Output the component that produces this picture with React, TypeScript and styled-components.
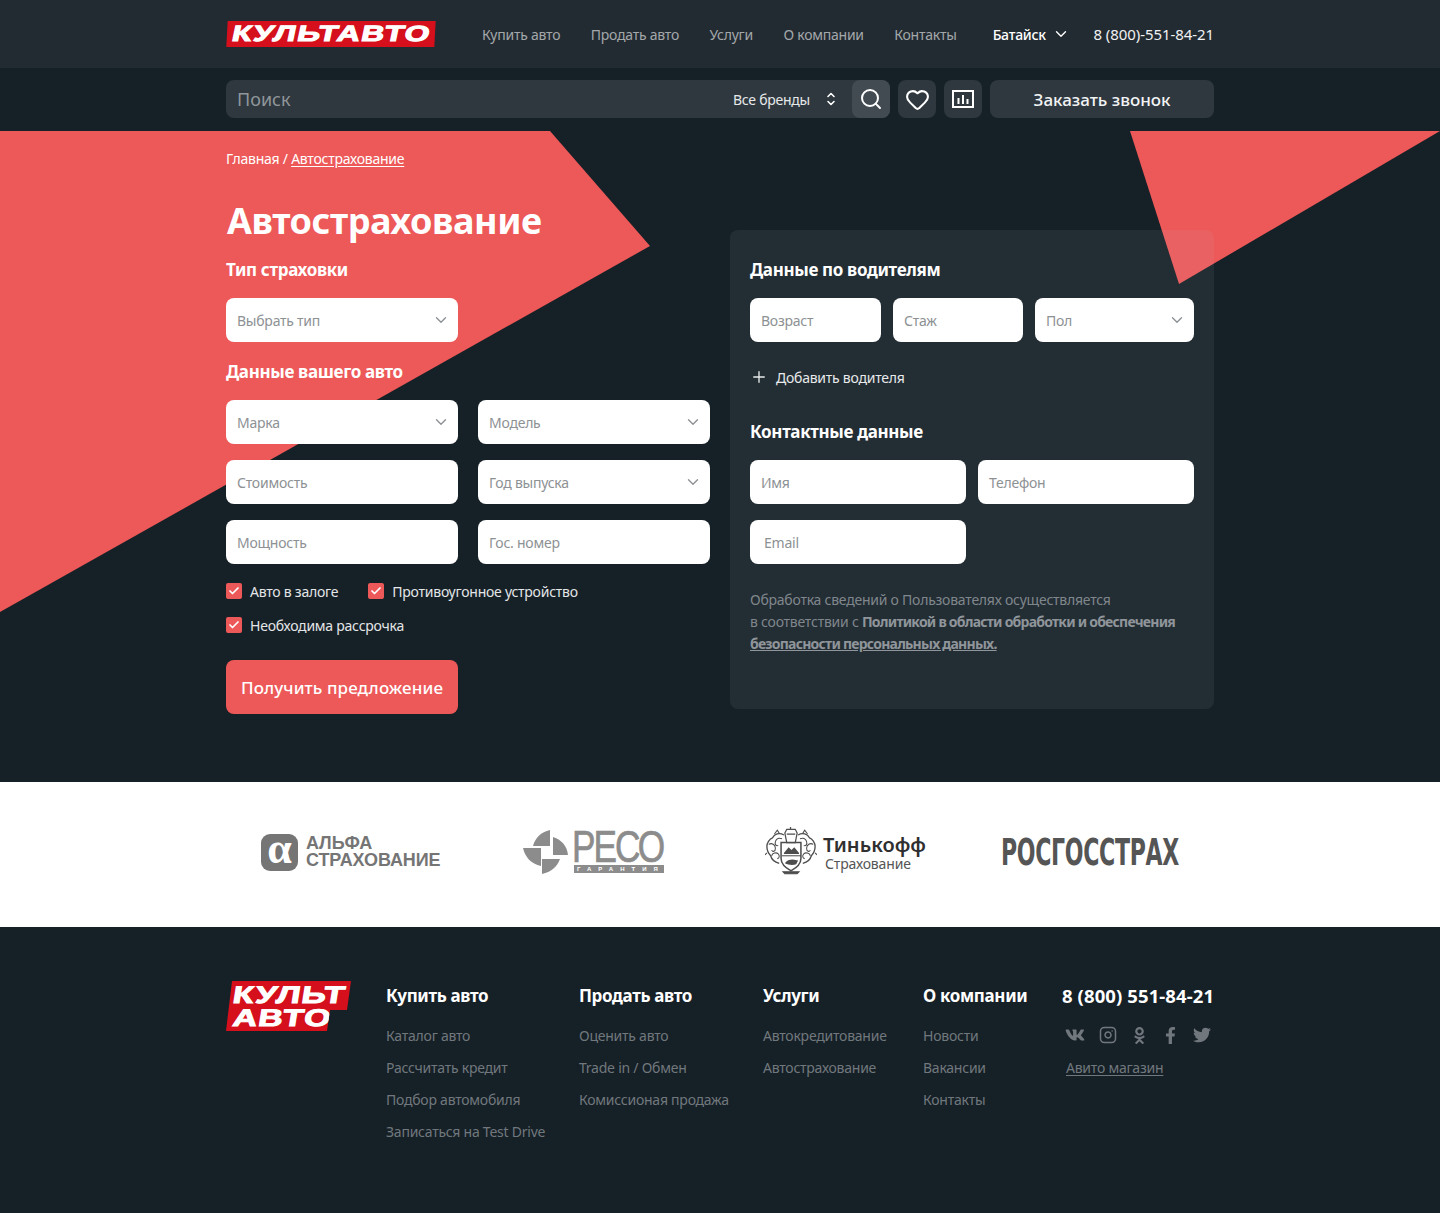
import React from 'react'
import styled, { createGlobalStyle } from 'styled-components'
import { Check, ChevronDown, Heart, Plus, Search } from 'lucide-react'
import { FaFacebookF, FaOdnoklassniki, FaTwitter, FaVk } from 'react-icons/fa'
import { FiInstagram } from 'react-icons/fi'

const GlobalStyle = createGlobalStyle`
  * {
    box-sizing: border-box;
  }

  body {
    margin: 0;
    background: #162027;
    color: #fff;
    font-family: 'Noto Sans', 'Open Sans', sans-serif;
    letter-spacing: -0.015em;
  }

  a {
    color: inherit;
    text-decoration: none;
  }
`

const Container = styled.div`
  width: 988px;
  margin: 0 auto;
`

const TopBar = styled.header`
  height: 68px;
  background: #232b32;
`

const TopRow = styled(Container)`
  display: flex;
  align-items: center;
  height: 68px;
`

const LogoBox = styled.div`
  width: 208px;
  height: 26px;
  margin: 0 47px 0 1px;
  background: #d50f1c;
  transform: skewX(-3deg);
  display: flex;
  align-items: center;
  justify-content: center;
  overflow: hidden;
`

const LogoText = styled.span`
  font-family: 'Liberation Sans', sans-serif;
  font-weight: 700;
  font-size: 22px;
  color: #fff;
  letter-spacing: 0.9px;
  transform: skewX(-9deg) scaleX(1.45);
  -webkit-text-stroke: 1px #fff;
  white-space: nowrap;
`

const Nav = styled.nav`
  display: flex;
  gap: 30.5px;
  font-size: 14px;
  color: #a3a8ab;
`

const City = styled.div`
  display: flex;
  align-items: center;
  gap: 6px;
  margin-left: 36px;
  font-size: 14px;
  font-weight: 500;
`

const Phone = styled.a`
  margin-left: auto;
  font-size: 15px;
  letter-spacing: -0.005em;
  color: #f0f1f2;
`

const SearchBand = styled.div`
  height: 63px;
  background: #162027;
`

const SearchRow = styled(Container)`
  display: flex;
  gap: 8px;
  padding-top: 12px;
`

const SearchBox = styled.div`
  width: 664px;
  height: 38px;
  display: flex;
  align-items: center;
  background: #2f383f;
  border-radius: 8px;
  padding-left: 11px;
`

const SearchHint = styled.span`
  flex: 1;
  font-size: 18px;
  letter-spacing: 0;
  color: #90969a;
`

const Brands = styled.div`
  display: flex;
  align-items: center;
  gap: 16px;
  margin-right: 16px;
  font-size: 14px;
  color: #e6e8e9;
`

const IconButton = styled.button<{ $active?: boolean }>`
  width: 38px;
  height: 38px;
  padding: 0;
  border: 0;
  border-radius: 8px;
  display: flex;
  align-items: center;
  justify-content: center;
  color: #fff;
  background: ${({ $active }) => ($active ? '#424b52' : '#2f383f')};
`

const CallButton = styled.button`
  flex: 1;
  height: 38px;
  border: 0;
  border-radius: 8px;
  background: #2f383f;
  color: #f2f3f4;
  font-family: inherit;
  font-size: 17px;
  font-weight: 500;
`

const Hero = styled.section`
  position: relative;
  height: 651px;
  overflow: hidden;
  background: #162027;
`

const Triangle = styled.div<{ $side: 'left' | 'right' }>`
  position: absolute;
  top: 0;
  background: #ed5858;
  ${({ $side }) =>
    $side === 'left'
      ? `left: 0; width: 650px; height: 481px; clip-path: polygon(0 0, 550px 0, 650px 115px, 0 481px);`
      : `right: 0; width: 310px; height: 153px; clip-path: polygon(0 0, 310px 0, 49px 153px);`}
`

const HeroGrid = styled(Container)`
  position: relative;
  display: grid;
  grid-template-columns: 484px 484px;
  gap: 20px;
  align-items: start;
`

const Crumbs = styled.div`
  padding-top: 19px;
  height: 49px;
  font-size: 14px;
  line-height: 17px;
  color: #fff;

  a {
    text-decoration: underline;
    text-underline-offset: 2px;
  }
`

const Title = styled.h1`
  margin: 18px 0 0 1px;
  font-size: 36px;
  line-height: 46px;
  font-weight: 700;
  letter-spacing: -0.012em;
`

const SectionTitle = styled.h3<{ $top?: number }>`
  margin: ${({ $top }) => $top ?? 0}px 0 16px;
  font-size: 17px;
  line-height: 24px;
  font-weight: 700;
  letter-spacing: -0.02em;
`

const FieldGrid = styled.div`
  display: grid;
  grid-template-columns: 232px 232px;
  gap: 16px 20px;
`

const Field = styled.div`
  height: 44px;
  display: flex;
  align-items: center;
  justify-content: space-between;
  padding: 0 8px 0 11px;
  background: #fff;
  border-radius: 8px;
  font-size: 14px;
  color: #8d9194;

  svg {
    color: #8d9194;
  }
`

const Checks = styled.div`
  display: flex;
  flex-wrap: wrap;
  gap: 18px 30px;
  margin-top: 19px;
`

const CheckItem = styled.label<{ $wide?: boolean }>`
  display: flex;
  align-items: center;
  gap: 8px;
  height: 16px;
  font-size: 14px;
  color: #e4e6e7;
  ${({ $wide }) => $wide && 'flex-basis: 100%;'}
`

const CheckBox = styled.span`
  width: 16px;
  height: 16px;
  border-radius: 2px;
  background: #ed5858;
  display: flex;
  align-items: center;
  justify-content: center;
  color: #fff;
`

const Submit = styled.button`
  display: block;
  width: 232px;
  height: 54px;
  margin-top: 27px;
  border: 0;
  border-radius: 8px;
  background: #ed5858;
  color: #fff;
  font-family: inherit;
  font-size: 17px;
  letter-spacing: 0.1px;
  font-weight: 500;
`

const Panel = styled.div`
  margin-top: 99px;
  height: 479px;
  padding: 28px 20px 0;
  border-radius: 8px;
  background: rgba(190, 205, 215, 0.08);
`

const DriverRow = styled.div`
  display: grid;
  grid-template-columns: 131px 130px 159px;
  gap: 12px;
`

const AddDriver = styled.div`
  display: flex;
  align-items: center;
  gap: 8px;
  margin-top: 24px;
  height: 22px;
  font-size: 14px;
  color: #e8eaeb;
`

const ContactGrid = styled.div`
  display: grid;
  grid-template-columns: 216px 216px;
  gap: 16px 12px;
`

const EmailField = styled(Field)`
  padding-left: 14px;
`

const Policy = styled.p`
  margin: 25px 0 0;
  font-size: 14px;
  line-height: 22px;
  color: #80878c;
  white-space: nowrap;

  a {
    font-weight: 700;
    letter-spacing: -0.055em;
    color: #8f959a;
  }

  a.line {
    text-decoration: underline;
  }
`

const Partners = styled.section`
  height: 145px;
  background: #fff;
`

const PartnerRow = styled(Container)`
  height: 145px;
  display: grid;
  grid-template-columns: 262px 242px 236px 213px;
  align-items: center;
  padding: 0 0 5px 35px;
  letter-spacing: 0;
`

const Alfa = styled.div`
  display: flex;
  align-items: center;
  gap: 8px;
  color: #757575;
`

const AlfaMark = styled.div`
  width: 37px;
  height: 37px;
  border-radius: 9px;
  background: #757575;
  color: #fff;
  display: flex;
  align-items: center;
  justify-content: center;
  font-family: 'Liberation Serif', serif;
  font-size: 44px;
  font-weight: 700;
  line-height: 30px;
  padding-bottom: 6px;
`

const AlfaText = styled.div`
  font-family: 'Liberation Sans', sans-serif;
  font-size: 18px;
  line-height: 17px;
  font-weight: 700;
  letter-spacing: -0.1px;
`

const Reso = styled.div`
  display: flex;
  align-items: flex-start;
  color: #8c8c8c;
`

const ResoName = styled.div`
  width: 92px;
  margin-left: 2px;
  font-family: 'Liberation Sans', sans-serif;
  font-size: 44px;
  line-height: 35px;
  letter-spacing: -2.4px;
  -webkit-text-stroke: 0.7px #8c8c8c;
  transform: scaleX(0.8);
  transform-origin: left;
  white-space: nowrap;
`

const ResoSub = styled.div`
  width: 90px;
  height: 8px;
  margin: 1px 0 0 4px;
  padding-left: 3px;
  background: #8c8c8c;
  color: #fff;
  font-family: 'Liberation Sans', sans-serif;
  font-size: 6px;
  line-height: 8px;
  font-weight: 700;
  letter-spacing: 7px;
  overflow: hidden;
  white-space: nowrap;
`

const Tinkoff = styled.div`
  display: flex;
  align-items: center;
  gap: 6px;
`

const TinkoffName = styled.div`
  font-size: 20px;
  line-height: 22px;
  font-weight: 600;
  color: #2f2f2f;
`

const TinkoffSub = styled.div`
  margin-left: 2px;
  font-size: 14px;
  line-height: 15px;
  letter-spacing: -0.01em;
  color: #555;
`

const Rosgos = styled.div`
  font-family: 'DejaVu Sans Condensed', 'DejaVu Sans', sans-serif;
  font-size: 38px;
  line-height: 40px;
  font-weight: 700;
  letter-spacing: -0.5px;
  color: #555;
  transform: scaleX(0.645);
  transform-origin: left;
  white-space: nowrap;
`

const Footer = styled.footer`
  height: 286px;
  background: #162027;
`

const FooterRow = styled(Container)`
  display: grid;
  grid-template-columns: 160px 193px 184px 160px 139px 1fr;
  padding-top: 54px;
`

const FooterLogo = styled.div`
  width: 125px;
  height: 50px;
  background: #d50f1c;
  clip-path: polygon(6px 0, 125px 0, 121px 29px, 104px 29px, 101px 50px, 0 50px);
  display: flex;
  flex-direction: column;
  padding: 2px 0 0 7px;
`

const FooterLogoLine = styled.span`
  font-family: 'Liberation Sans', sans-serif;
  font-weight: 700;
  font-size: 24px;
  line-height: 23px;
  letter-spacing: 0.9px;
  color: #fff;
  -webkit-text-stroke: 1px #fff;
  transform: skewX(-9deg) scaleX(1.41);
  transform-origin: left;
  white-space: nowrap;
`

const ColumnTitle = styled.div`
  font-size: 17px;
  line-height: 24px;
  font-weight: 700;
  letter-spacing: -0.02em;
  margin: 3px 0 12px;
  white-space: nowrap;
`

const PhoneTitle = styled(ColumnTitle)`
  font-size: 18.5px;
  letter-spacing: 0.1px;
`

const ColumnLink = styled.a`
  display: block;
  font-size: 14px;
  line-height: 32px;
  color: #71787d;
  white-space: nowrap;
`

const Socials = styled.div`
  display: flex;
  justify-content: space-between;
  align-items: center;
  width: 146px;
  margin: 18px 0 0 3px;
  height: 18px;
  color: #71787d;
`

const AvitoLink = styled.a`
  display: inline-block;
  margin: 13px 0 0 4px;
  font-size: 14px;
  line-height: 22px;
  color: #71787d;
  text-decoration: underline;
  text-underline-offset: 2px;
`

const Chevron = () => <ChevronDown size={18} strokeWidth={1.8} />

const UpDown = () => (
  <svg width="10" height="14" viewBox="0 0 10 14" fill="none" stroke="#fff" strokeWidth="1.6" strokeLinecap="round" strokeLinejoin="round">
    <path d="M2 4.5 5 1.5l3 3" />
    <path d="M2 9.5l3 3 3-3" />
  </svg>
)

const ChartIcon = () => (
  <svg width="22" height="18" viewBox="0 0 22 18" fill="none" stroke="#fff" strokeWidth="2">
    <rect x="1" y="1" width="20" height="16" />
    <path d="M6.5 8v6M11 5v9M15.5 9v5" />
  </svg>
)

const ResoMark = () => (
  <svg width="47" height="46" viewBox="5 5 47 46" fill="#8c8c8c">
    <path d="M32 6V22H15C17 14 23 8 32 6Z" />
    <path d="M35 13C44 16 49 22 50 31H35Z" />
    <path d="M24 35H42C39 43 33 48 24 50Z" />
    <path d="M5 24H23V42C13 40 7 33 5 24Z" />
  </svg>
)

const Crest = () => (
  <svg width="52" height="50" viewBox="4 6 55 52" fill="none" stroke="#4d4d4d" strokeWidth="1.1">
    <path d="M27 8h9l2 4-2 10h-9l-2-10zM27 13h9M31 8V5" strokeWidth="1.3" />
    <path d="M21 22h21v17c0 7-6 10-10.500 13C27 49 21 46 21 39z" strokeWidth="1.6" />
    <path d="M24 33l5-6 3 3 3-3 5 6v1H24z" fill="#4d4d4d" stroke="none" />
    <path d="M25 44c2-3 5-4 8-4s4 1 6 1l-2 4c-3 1-8 1-12-1z" fill="#4d4d4d" stroke="none" />
    <path d="M22 36h20" />
    <path d="M24 14c-5-3-10-1-12 3-3 1-6 5-6 9 0 5 2 8 4 10 1 4 5 7 9 8" strokeWidth="1.4" />
    <path d="M39 14c5-3 10-1 12 3 3 1 6 5 6 9 0 5-2 8-4 10-1 4-5 7-9 8" strokeWidth="1.4" />
    <path d="M22 18c-3-1-6 0-7 3s1 5 3 4M8 24c3-2 7 0 7 4s-3 4-4 2M11 36c1-3 5-4 7-2s1 5-1 5" />
    <path d="M41 18c3-1 6 0 7 3s-1 5-3 4M55 24c-3-2-7 0-7 4s3 4 4 2M52 36c-1-3-5-4-7-2s-1 5 1 5" />
    <path d="M14 13l3-4 2 3M49 13l-3-4-2 3M6 33l-2 2M57 33l2 2" />
    <path d="M23 53h17l-2 2H25z" fill="#4d4d4d" />
  </svg>
)

const footerColumns = [
  { title: 'Купить авто', links: ['Каталог авто', 'Рассчитать кредит', 'Подбор автомобиля', 'Записаться на Test Drive'] },
  { title: 'Продать авто', links: ['Оценить авто', 'Trade in / Обмен', 'Комиссионая продажа'] },
  { title: 'Услуги', links: ['Автокредитование', 'Автострахование'] },
  { title: 'О компании', links: ['Новости', 'Вакансии', 'Контакты'] },
]

const CheckOption = ({ label, wide }: { label: string; wide?: boolean }) => (
  <CheckItem $wide={wide}>
    <CheckBox>
      <Check size={12} strokeWidth={3.5} />
    </CheckBox>
    {label}
  </CheckItem>
)

const App = () => {
  return (
    <>
      <GlobalStyle />
      <TopBar>
        <TopRow>
          <LogoBox>
            <LogoText>КУЛЬТАВТО</LogoText>
          </LogoBox>
          <Nav>
            <a>Купить авто</a>
            <a>Продать авто</a>
            <a>Услуги</a>
            <a>О компании</a>
            <a>Контакты</a>
          </Nav>
          <City>
            Батайск <Chevron />
          </City>
          <Phone>8 (800)-551-84-21</Phone>
        </TopRow>
      </TopBar>
      <SearchBand>
        <SearchRow>
          <SearchBox>
            <SearchHint>Поиск</SearchHint>
            <Brands>
              Все бренды <UpDown />
            </Brands>
            <IconButton $active>
              <Search size={24} strokeWidth={2} />
            </IconButton>
          </SearchBox>
          <IconButton>
            <Heart size={25} strokeWidth={2} />
          </IconButton>
          <IconButton>
            <ChartIcon />
          </IconButton>
          <CallButton>Заказать звонок</CallButton>
        </SearchRow>
      </SearchBand>
      <Hero>
        <Triangle $side="left" />
        <Triangle $side="right" />
        <HeroGrid>
          <div>
            <Crumbs>
              Главная / <a>Автострахование</a>
            </Crumbs>
            <Title>Автострахование</Title>
            <SectionTitle $top={14}>Тип страховки</SectionTitle>
            <FieldGrid>
              <Field>
                Выбрать тип <Chevron />
              </Field>
            </FieldGrid>
            <SectionTitle $top={18}>Данные вашего авто</SectionTitle>
            <FieldGrid>
              <Field>
                Марка <Chevron />
              </Field>
              <Field>
                Модель <Chevron />
              </Field>
              <Field>Стоимость</Field>
              <Field>
                Год выпуска <Chevron />
              </Field>
              <Field>Мощность</Field>
              <Field>Гос. номер</Field>
            </FieldGrid>
            <Checks>
              <CheckOption label="Авто в залоге" />
              <CheckOption label="Противоугонное устройство" />
              <CheckOption label="Необходима рассрочка" wide />
            </Checks>
            <Submit>Получить предложение</Submit>
          </div>
          <Panel>
            <SectionTitle>Данные по водителям</SectionTitle>
            <DriverRow>
              <Field>Возраст</Field>
              <Field>Стаж</Field>
              <Field>
                Пол <Chevron />
              </Field>
            </DriverRow>
            <AddDriver>
              <Plus size={18} strokeWidth={1.8} />
              Добавить водителя
            </AddDriver>
            <SectionTitle $top={32}>Контактные данные</SectionTitle>
            <ContactGrid>
              <Field>Имя</Field>
              <Field>Телефон</Field>
              <EmailField>Email</EmailField>
            </ContactGrid>
            <Policy>
              Обработка сведений о Пользователях осуществляется
              <br />в соответствии с <a>Политикой в области обработки и обеспечения</a>
              <br />
              <a className="line">безопасности персональных данных.</a>
            </Policy>
          </Panel>
        </HeroGrid>
      </Hero>
      <Partners>
        <PartnerRow>
          <Alfa>
            <AlfaMark>α</AlfaMark>
            <AlfaText>
              АЛЬФА
              <br />
              СТРАХОВАНИЕ
            </AlfaText>
          </Alfa>
          <Reso>
            <ResoMark />
            <div>
              <ResoName>РЕСО</ResoName>
              <ResoSub>ГАРАНТИЯ</ResoSub>
            </div>
          </Reso>
          <Tinkoff>
            <Crest />
            <div>
              <TinkoffName>Тинькофф</TinkoffName>
              <TinkoffSub>Страхование</TinkoffSub>
            </div>
          </Tinkoff>
          <Rosgos>РОСГОССТРАХ</Rosgos>
        </PartnerRow>
      </Partners>
      <Footer>
        <FooterRow>
          <FooterLogo>
            <FooterLogoLine>КУЛЬТ</FooterLogoLine>
            <FooterLogoLine>АВТО</FooterLogoLine>
          </FooterLogo>
          {footerColumns.map((column) => (
            <div key={column.title}>
              <ColumnTitle>{column.title}</ColumnTitle>
              {column.links.map((link) => (
                <ColumnLink key={link}>{link}</ColumnLink>
              ))}
            </div>
          ))}
          <div>
            <PhoneTitle>8 (800) 551-84-21</PhoneTitle>
            <Socials>
              <FaVk size={20} />
              <FiInstagram size={18} />
              <FaOdnoklassniki size={17} />
              <FaFacebookF size={17} />
              <FaTwitter size={18} />
            </Socials>
            <AvitoLink>Авито магазин</AvitoLink>
          </div>
        </FooterRow>
      </Footer>
    </>
  )
}

export default App
